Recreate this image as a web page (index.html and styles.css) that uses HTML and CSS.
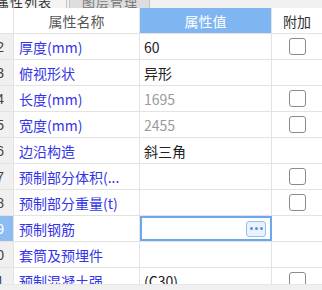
FILE: index.html
```html
<!DOCTYPE html>
<html lang="zh">
<head>
<meta charset="utf-8">
<link rel="stylesheet" href="styles.css">
</head>
<body>
<div class="panel">
  <div class="tabs">
    <div class="tab active"><span>属性列表</span></div>
    <div class="tab"><span>图层管理</span></div>
  </div>
  <div class="grid">
    <div class="row head">
      <div class="num"></div>
      <div class="name">属性名称</div>
      <div class="val">属性值</div>
      <div class="add">附加</div>
    </div>
    <div class="row">
      <div class="num"><span>2</span></div>
      <div class="name">厚度(mm)</div>
      <div class="val">60</div>
      <div class="add"><span class="cb"></span></div>
    </div>
    <div class="row">
      <div class="num"><span>3</span></div>
      <div class="name">俯视形状</div>
      <div class="val">异形</div>
      <div class="add"></div>
    </div>
    <div class="row">
      <div class="num"><span>4</span></div>
      <div class="name">长度(mm)</div>
      <div class="val dim">1695</div>
      <div class="add"><span class="cb"></span></div>
    </div>
    <div class="row">
      <div class="num"><span>5</span></div>
      <div class="name">宽度(mm)</div>
      <div class="val dim">2455</div>
      <div class="add"><span class="cb"></span></div>
    </div>
    <div class="row">
      <div class="num"><span>6</span></div>
      <div class="name">边沿构造</div>
      <div class="val">斜三角</div>
      <div class="add"></div>
    </div>
    <div class="row">
      <div class="num"><span>7</span></div>
      <div class="name">预制部分体积(...</div>
      <div class="val"></div>
      <div class="add"><span class="cb"></span></div>
    </div>
    <div class="row">
      <div class="num"><span>8</span></div>
      <div class="name">预制部分重量(t)</div>
      <div class="val"></div>
      <div class="add"><span class="cb"></span></div>
    </div>
    <div class="row selected">
      <div class="num"><span>9</span></div>
      <div class="name">预制钢筋</div>
      <div class="val editing"><span class="more"><i></i><i></i><i></i></span></div>
      <div class="add"></div>
    </div>
    <div class="row">
      <div class="num"><span>10</span></div>
      <div class="name">套筒及预埋件</div>
      <div class="val"></div>
      <div class="add"></div>
    </div>
    <div class="row">
      <div class="num"><span>11</span></div>
      <div class="name">预制混凝土强...</div>
      <div class="val">(C30)</div>
      <div class="add"><span class="cb"></span></div>
    </div>
  </div>
  <div class="footer"></div>
</div>
</body>
</html>
```
FILE: styles.css
```css
html, body {
  margin: 0;
  padding: 0;
  background: #ffffff;
}
body {
  width: 322px;
  height: 290px;
  overflow: hidden;
  font-family: "Noto Sans CJK SC", "Noto Sans", sans-serif;
  font-size: 14px;
}
.panel {
  position: relative;
  width: 322px;
  height: 290px;
  overflow: hidden;
}
.tabs {
  display: flex;
  height: 8px;
  background: #f0f0f0;
  overflow: hidden;
}
.tab {
  position: relative;
  height: 8px;
  overflow: hidden;
  color: #777;
  font-size: 13px;
  background: #dedede;
  border: 1px solid #c4c4c4;
  border-top: 0;
  border-bottom: 0;
  width: 79px;
  margin-left: 2px;
}
.tab span {
  position: absolute;
  left: 12px;
  bottom: -1px;
  line-height: 14px;
  letter-spacing: 1px;
}
.tab.active {
  width: 66px;
  margin-left: 0;
  background: #f4f4f4;
  border-left: 0;
  color: #333;
}
.tab.active span {
  left: -4px;
}
.grid {
  display: flex;
  flex-direction: column;
}
.row {
  display: grid;
  grid-template-columns: 14px 126px 132px 50px;
  height: 26px;
  border-bottom: 1px solid #e3e3e3;
  box-sizing: border-box;
}
.row > div {
  border-right: 1px solid #e3e3e3;
  box-sizing: border-box;
  display: flex;
  align-items: center;
  overflow: hidden;
  white-space: nowrap;
}
.row > div.add {
  border-right: 0;
  justify-content: center;
}
.num {
  background: #f0f0f0;
  color: #444;
  justify-content: flex-end;
  position: relative;
}
.num span {
  position: absolute;
  right: 9px;
  font-family: "Liberation Sans", sans-serif;
  font-size: 14px;
}
.name {
  color: #3535e8;
  padding-left: 5px;
}
.val {
  color: #222;
  padding-left: 4px;
}
.val.dim {
  color: #9a9a9a;
}
.head > div {
  justify-content: center;
}
.head .num {
  background: #fff;
}
.head .name {
  color: #555;
  padding-left: 0;
}
.head .val {
  background: #7fb6f2;
  color: #fff;
  padding-left: 0;
}
.head .add {
  color: #333;
}
.cb {
  width: 15px;
  height: 15px;
  border: 1px solid #8a8a8a;
  border-radius: 3px;
  background: #fff;
}
.selected .num {
  background: #8cbcf2;
}
.selected .num span {
  color: #fff;
}
.val.editing {
  border: 2px solid #6ea8ec;
  justify-content: flex-end;
  padding-right: 4px;
}
.more {
  display: flex;
  align-items: center;
  justify-content: center;
  gap: 2px;
  width: 18px;
  height: 14px;
  border: 1px solid #93c0f0;
  border-radius: 3px;
  background: #eaf3fd;
}
.more i {
  width: 3px;
  height: 3px;
  background: #4f92e4;
  border-radius: 50%;
}
.footer {
  position: absolute;
  left: 0;
  right: 0;
  bottom: 0;
  height: 5px;
  background: #f0f0f0;
  border-top: 1px solid #e6e6e6;
}
```
